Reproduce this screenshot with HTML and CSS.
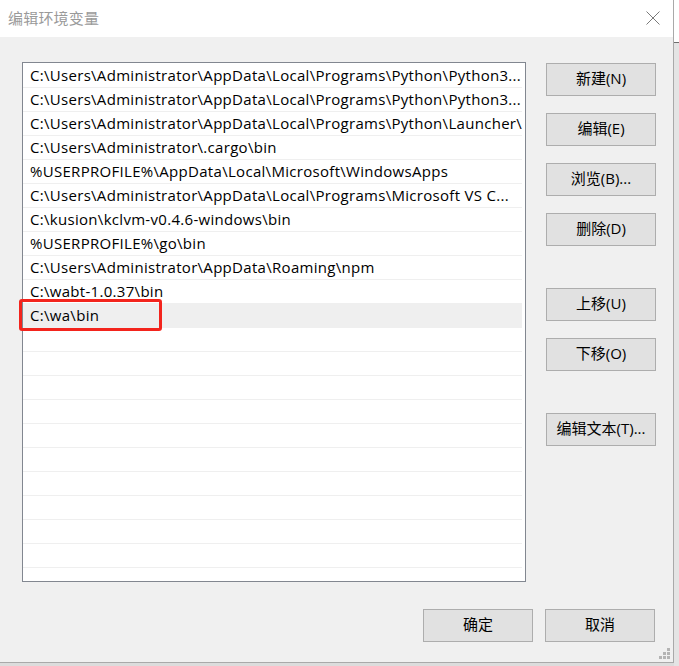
FILE: index.html
```html
<!DOCTYPE html>
<html lang="zh-CN">
<head>
<meta charset="utf-8">
<title>编辑环境变量</title>
<link rel="stylesheet" href="styles.css">
</head>
<body>
<div class="desk">
  <div class="window">
    <div class="titlebar">
      <span class="title">编辑环境变量</span>
      <svg class="close" width="14" height="14" viewBox="0 0 14 14"><path d="M0.5 0.5L13.5 13.5M13.5 0.5L0.5 13.5" stroke="#7a7a7a" stroke-width="1" fill="none"/></svg>
    </div>
    <div class="body">
      <div class="main">
        <div class="list">
          <div class="rows">
            <div class="row">C:\Users\Administrator\AppData\Local\Programs\Python\Python3...</div>
            <div class="row">C:\Users\Administrator\AppData\Local\Programs\Python\Python3...</div>
            <div class="row">C:\Users\Administrator\AppData\Local\Programs\Python\Launcher\</div>
            <div class="row">C:\Users\Administrator\.cargo\bin</div>
            <div class="row">%USERPROFILE%\AppData\Local\Microsoft\WindowsApps</div>
            <div class="row">C:\Users\Administrator\AppData\Local\Programs\Microsoft VS C...</div>
            <div class="row">C:\kusion\kclvm-v0.4.6-windows\bin</div>
            <div class="row">%USERPROFILE%\go\bin</div>
            <div class="row">C:\Users\Administrator\AppData\Roaming\npm</div>
            <div class="row">C:\wabt-1.0.37\bin</div>
            <div class="row row-hover">C:\wa\bin</div>
            <div class="row"></div>
            <div class="row"></div>
            <div class="row"></div>
            <div class="row"></div>
            <div class="row"></div>
            <div class="row"></div>
            <div class="row"></div>
            <div class="row"></div>
            <div class="row"></div>
            <div class="row"></div>
            <div class="row"></div>
          </div>
          <span class="mark"></span>
        </div>
        <div class="actions">
          <button class="btn">新建(N)</button>
          <button class="btn">编辑(E)</button>
          <button class="btn">浏览(B)...</button>
          <button class="btn">删除(D)</button>
          <button class="btn spaced">上移(U)</button>
          <button class="btn">下移(O)</button>
          <button class="btn spaced">编辑文本(T)...</button>
        </div>
      </div>
      <div class="footer">
        <button class="btn">确定</button>
        <button class="btn">取消</button>
      </div>
      <svg class="grip" width="12" height="12" viewBox="0 0 12 12">
        <rect x="8" y="0" width="3" height="3" fill="#b4b4b4"/>
        <rect x="4" y="4" width="3" height="3" fill="#b4b4b4"/>
        <rect x="8" y="4" width="3" height="3" fill="#b4b4b4"/>
        <rect x="0" y="8" width="3" height="3" fill="#b4b4b4"/>
        <rect x="4" y="8" width="3" height="3" fill="#b4b4b4"/>
        <rect x="8" y="8" width="3" height="3" fill="#b4b4b4"/>
      </svg>
    </div>
  </div>
  <div class="side">
    <div class="side-top"></div>
    <div class="side-rest"></div>
  </div>
</div>
</body>
</html>
```
FILE: styles.css
```css
* { box-sizing: border-box; }
html, body { margin: 0; padding: 0; }
body {
  width: 679px;
  height: 666px;
  overflow: hidden;
  background: #dcdcdc;
  font-family: "Open Sans", "Noto Sans CJK SC", sans-serif;
  color: #000;
}
.desk {
  display: flex;
  align-items: flex-start;
  height: 666px;
}
.window {
  width: 674px;
  height: 663px;
  background: #f0f0f0;
  border-right: 1px solid #a9a9a9;
  border-bottom: 1px solid #a9a9a9;
  display: flex;
  flex-direction: column;
  flex: none;
}
.titlebar {
  height: 37px;
  background: #fff;
  display: flex;
  align-items: center;
  justify-content: space-between;
  padding: 0 13px 0 8px;
  flex: none;
}
.title {
  font-family: "Noto Sans CJK SC", sans-serif;
  font-size: 15px;
  color: #9a9a9a;
  letter-spacing: 0.2px;
  margin-top: -2px;
}
.close { display: block; margin-top: -1px; }
.body {
  flex: 1;
  position: relative;
  padding: 25px 0 0 22px;
}
.main {
  display: flex;
  gap: 20px;
}
.list {
  position: relative;
  width: 504px;
  height: 520px;
  border: 1px solid #828790;
  background: #fff;
  padding: 1px 0 0 0;
  flex: none;
}
.rows {
  height: 100%;
  overflow: hidden;
  margin-right: 3px;
}
.row {
  height: 24px;
  border-bottom: 1px solid #efefef;
  font-size: 15px;
  letter-spacing: 0.3px;
  line-height: 23px;
  padding-left: 7px;
  white-space: nowrap;
  overflow: hidden;
}
.row-hover { background: #efefef; }
.mark {
  position: absolute;
  left: -4px;
  top: 236px;
  width: 143px;
  height: 32px;
  border: 3px solid #f3241d;
  border-radius: 3px;
}
.actions {
  display: flex;
  flex-direction: column;
  gap: 17px;
  margin-top: 1px;
}
.btn {
  width: 110px;
  height: 33px;
  background: #e1e1e1;
  border: 1px solid #adadad;
  border-radius: 0;
  font-family: "Open Sans", "Noto Sans CJK SC", sans-serif;
  font-size: 15px;
  color: #000;
  padding: 0 0 2px 0;
  line-height: 29px;
}
.spaced { margin-top: 25px; }
.footer {
  display: flex;
  justify-content: flex-end;
  gap: 12px;
  padding-right: 18px;
  margin-top: 27px;
}
.grip {
  position: absolute;
  right: 2px;
  bottom: 2px;
}
.side {
  flex: 1;
  height: 666px;
  display: flex;
  flex-direction: column;
}
.side-top {
  height: 43px;
  background: #fff;
  border-bottom: 1px solid #6e6e6e;
}
.side-rest {
  flex: 1;
  background: #e4e4e4;
}
```
